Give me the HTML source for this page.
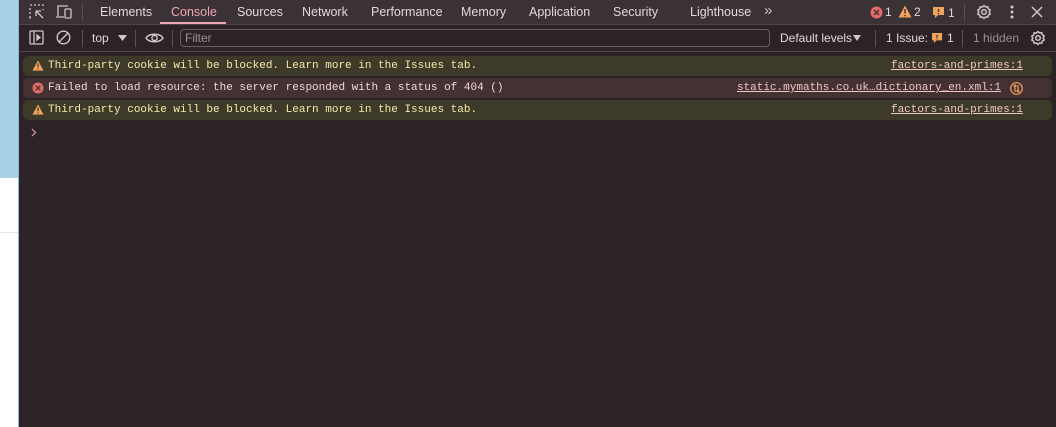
<!DOCTYPE html>
<html><head><style>
*{box-sizing:border-box;margin:0;padding:0}
body{width:1056px;height:427px;overflow:hidden;background:#2b2326;font-family:"Liberation Sans",sans-serif;position:relative}
.left{position:absolute;left:0;top:0;width:19px;height:427px;background:#fff}
.left .b{position:absolute;top:0;left:0;width:19px;height:178px;background:#a8d1e7}
.left .l{position:absolute;top:232px;left:0;width:18px;height:1px;background:#e4e4e4}
.left .e{position:absolute;top:0;right:0;width:1px;height:427px;background:#8cb8d4}
.panel{position:absolute;left:19px;top:0;right:0;bottom:0;background:#2b2326}
.bar1{position:absolute;left:0;right:0;top:0;height:25px;background:#3a3234;border-bottom:1px solid #4d4447}
.bar2{position:absolute;left:0;right:0;top:25px;height:27px;background:#2b2326;border-bottom:1px solid #4d4447}
.t{position:absolute;top:5px;font-size:12.5px;color:#e0d8da}
.sel{color:#f0a5b7}
.ul{position:absolute;left:141px;top:22px;width:66px;height:2px;background:#f0a5b7}
.sep{position:absolute;width:1px;height:17px;background:#5a5053}
.msg{position:absolute;left:4px;right:4px;height:20px;border-radius:5px;font-family:"Liberation Mono",monospace;font-size:11px;line-height:20px;padding-left:25px}
.w{background:#3e3a2a;color:#f4e9a8}
.er{background:#443132;color:#f2d6d6}
.src{position:absolute;right:29px;top:0;color:#f1c5c8;text-decoration:underline}
.ic{position:absolute;left:9px;top:4px}
.s{font-size:12px;color:#e0d8da;position:absolute;top:6px}
</style></head><body>
<div class="left"><div class="b"></div><div class="l"></div><div class="e"></div></div>
<div class="panel">
<div class="bar1">
<svg style="position:absolute;left:10px;top:4px" width="16" height="16" viewBox="0 0 16 16" fill="none" stroke="#cfc6c8" stroke-width="1.3"><path d="M1 1h2M5 1h2M9 1h2M13 1h1v1M1 4v2M1 8v2M1 12v2h1M14 5v1" /><path d="M7 7l7 7M7 7v5M7 7h5"/></svg>
<svg style="position:absolute;left:36px;top:4px" width="18" height="16" viewBox="0 0 18 16" fill="none" stroke="#cfc6c8" stroke-width="1.3"><path d="M3 12V2h10M1 13h8"/><rect x="10" y="5" width="6" height="9" rx="1"/></svg>
<div class="sep" style="left:63px;top:4px"></div>
<span class="t" style="left:81px">Elements</span>
<span class="t sel" style="left:152px">Console</span>
<div class="ul"></div>
<span class="t" style="left:218px">Sources</span>
<span class="t" style="left:283px">Network</span>
<span class="t" style="left:352px">Performance</span>
<span class="t" style="left:442px">Memory</span>
<span class="t" style="left:510px">Application</span>
<span class="t" style="left:594px">Security</span>
<span class="t" style="left:671px">Lighthouse</span>
<span class="t" style="left:745px;top:2px;font-size:15px;color:#cfc6c8">»</span>
<svg style="position:absolute;left:851px;top:6px" width="13" height="13" viewBox="0 0 13 13"><circle cx="6.5" cy="6.5" r="6" fill="#e46a6a"/><path d="M4 4l5 5M9 4l-5 5" stroke="#3a3234" stroke-width="1.4"/></svg>
<span class="t" style="left:866px;font-size:12px">1</span>
<svg style="position:absolute;left:879px;top:5px" width="14" height="13" viewBox="0 0 14 13"><path d="M7 0.5L13.5 12.5H0.5z" fill="#f0a35c"/><path d="M7 4v4.5M7 10v1.2" stroke="#3a3234" stroke-width="1.4"/></svg>
<span class="t" style="left:895px;font-size:12px">2</span>
<svg style="position:absolute;left:914px;top:7px" width="12" height="12" viewBox="0 0 12 12"><path d="M0 0h11v8H5l-3 3V8H0z" fill="#f0a35c"/><path d="M5.5 2v3M5.5 6v1" stroke="#3a3234" stroke-width="1.3"/></svg>
<span class="t" style="left:929px;top:6px;font-size:12px">1</span>
<div class="sep" style="left:945px;top:4px"></div>
<svg style="position:absolute;left:957px;top:4px" width="16" height="16" viewBox="0 0 16 16" fill="none" stroke="#cfc6c8" stroke-width="1.5"><circle cx="8" cy="8" r="2.3"/><path d="M8 1.5l1.6 1.5 2.2-.3.5 2.1 1.9 1.2-1 1.9 1 2-1.9 1.2-.5 2.1-2.2-.3L8 14.5l-1.6-1.5-2.2.3-.5-2.1-1.9-1.2 1-2-1-1.9 1.9-1.2.5-2.1 2.2.3z"/></svg>
<svg style="position:absolute;left:990px;top:4px" width="6" height="16" viewBox="0 0 6 16" fill="#cfc6c8"><circle cx="3" cy="3" r="1.5"/><circle cx="3" cy="8" r="1.5"/><circle cx="3" cy="13" r="1.5"/></svg>
<svg style="position:absolute;left:1012px;top:6px" width="12" height="12" viewBox="0 0 12 12" stroke="#cfc6c8" stroke-width="1.5"><path d="M1 1l10 10M11 1L1 11"/></svg>
</div>
<div class="bar2">
<svg style="position:absolute;left:10px;top:5px" width="15" height="15" viewBox="0 0 15 15" fill="none" stroke="#cfc6c8" stroke-width="1.3"><rect x="1" y="1" width="13" height="13" rx="1"/><path d="M5 1v13"/><path d="M8 5l3 2.5L8 10z" fill="#cfc6c8"/></svg>
<svg style="position:absolute;left:37px;top:5px" width="15" height="15" viewBox="0 0 15 15" fill="none" stroke="#cfc6c8" stroke-width="1.4"><circle cx="7.5" cy="7.5" r="6.3"/><path d="M3 12L12 3"/></svg>
<div class="sep" style="left:63px;top:5px"></div>
<span class="s" style="left:73px">top</span>
<svg style="position:absolute;left:99px;top:10px" width="9" height="6"><path d="M0 0h9L4.5 6z" fill="#cfc6c8"/></svg>
<div class="sep" style="left:116px;top:5px"></div>
<svg style="position:absolute;left:126px;top:6px" width="19" height="14" viewBox="0 0 19 14" fill="none" stroke="#cfc6c8" stroke-width="1.4"><path d="M1 7C4 2 15 2 18 7C15 12 4 12 1 7z"/><circle cx="9.5" cy="7" r="2.6"/></svg>
<div class="sep" style="left:153px;top:5px"></div>
<div style="position:absolute;left:161px;top:4px;width:590px;height:18px;border:1px solid #6a6063;border-radius:4px"></div>
<span class="s" style="left:166px;color:#9a9093">Filter</span>
<span class="s" style="left:761px">Default levels</span>
<svg style="position:absolute;left:834px;top:10px" width="8" height="6"><path d="M0 0h8L4 6z" fill="#cfc6c8"/></svg>
<div class="sep" style="left:856px;top:5px"></div>
<span class="s" style="left:867px">1 Issue:</span>
<svg style="position:absolute;left:913px;top:8px" width="11" height="11" viewBox="0 0 12 12"><path d="M0 0h11v8H5l-3 3V8H0z" fill="#f0a35c"/><path d="M5.5 2v3M5.5 6v1" stroke="#2b2326" stroke-width="1.3"/></svg>
<span class="s" style="left:928px">1</span>
<div class="sep" style="left:943px;top:5px"></div>
<span class="s" style="left:954px;color:#9a9093">1 hidden</span>
<svg style="position:absolute;left:1011px;top:5px" width="16" height="16" viewBox="0 0 16 16" fill="none" stroke="#cfc6c8" stroke-width="1.5"><circle cx="8" cy="8" r="2.3"/><path d="M8 1.5l1.6 1.5 2.2-.3.5 2.1 1.9 1.2-1 1.9 1 2-1.9 1.2-.5 2.1-2.2-.3L8 14.5l-1.6-1.5-2.2.3-.5-2.1-1.9-1.2 1-2-1-1.9 1.9-1.2.5-2.1 2.2.3z"/></svg>
</div>
<div class="msg w" style="top:56px;line-height:21px"><svg class="ic" width="12" height="11" viewBox="0 0 14 13"><path d="M7 0.5L13.5 12.5H0.5z" fill="#f0a35c"/><path d="M7 4v4.5M7 10v1.2" stroke="#3e3a2a" stroke-width="1.5"/></svg>Third-party cookie will be blocked. Learn more in the Issues tab.<span class="src">factors-and-primes:1</span></div>
<div class="msg er" style="top:78px;line-height:21px"><svg class="ic" width="12" height="12" viewBox="0 0 13 13"><circle cx="6.5" cy="6.5" r="6" fill="#e46a6a"/><path d="M4 4l5 5M9 4l-5 5" stroke="#443132" stroke-width="1.4"/></svg>Failed to load resource: the server responded with a status of 404 ()<span class="src" style="right:51px">static.mymaths.co.uk…dictionary_en.xml:1</span><svg style="position:absolute;right:29px;top:4px" width="13" height="13" viewBox="0 0 13 13" fill="none" stroke="#f0a35c" stroke-width="1.2"><circle cx="6.5" cy="6.5" r="5.8"/><path d="M5 3v7M3.5 4.5L5 3l1.5 1.5M8 10V3M6.5 8.5L8 10l1.5-1.5"/></svg></div>
<div class="msg w" style="top:100px;line-height:21px"><svg class="ic" width="12" height="11" viewBox="0 0 14 13"><path d="M7 0.5L13.5 12.5H0.5z" fill="#f0a35c"/><path d="M7 4v4.5M7 10v1.2" stroke="#3e3a2a" stroke-width="1.5"/></svg>Third-party cookie will be blocked. Learn more in the Issues tab.<span class="src">factors-and-primes:1</span></div>
<svg style="position:absolute;left:12px;top:128px" width="6" height="9" viewBox="0 0 6 9" fill="none" stroke="#c98aa6" stroke-width="1.3"><path d="M1 1l3.5 3.5L1 8"/></svg>
</div>
</body></html>
